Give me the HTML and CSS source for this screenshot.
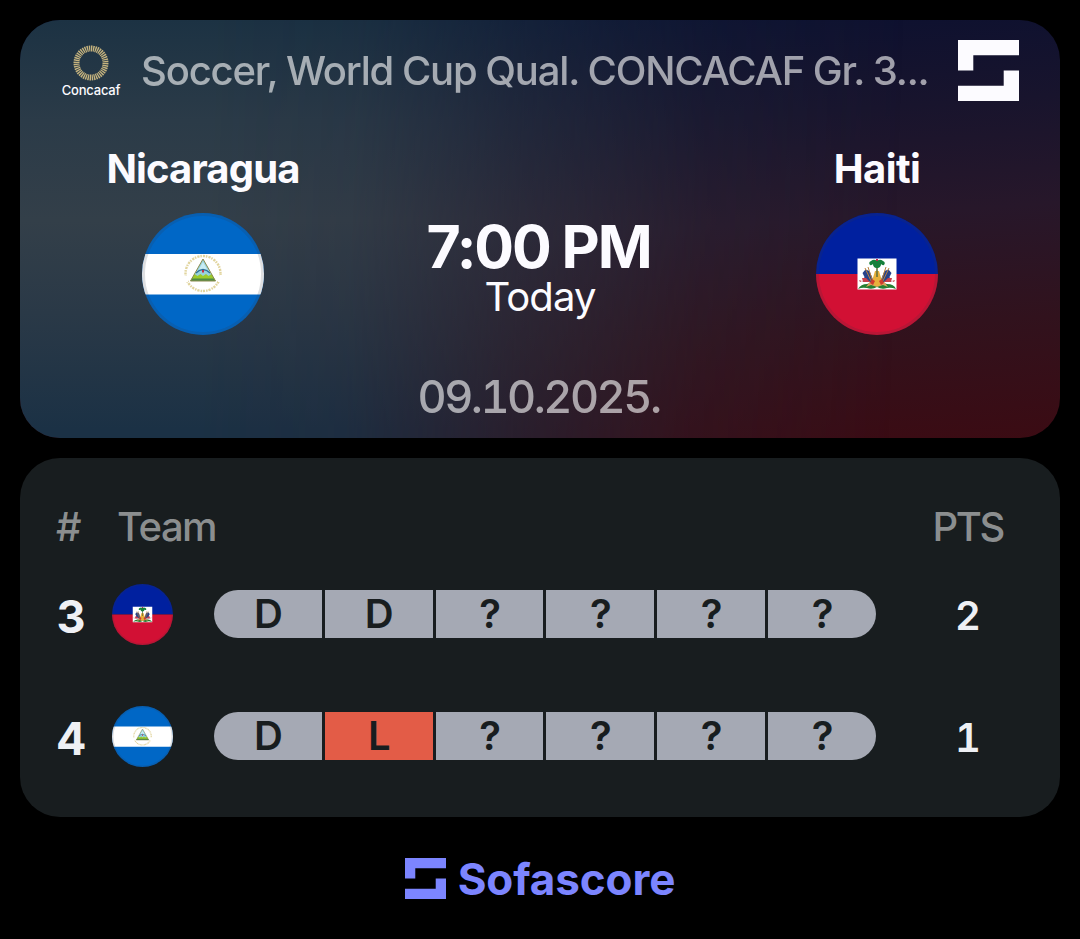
FILE: index.html
```
<!DOCTYPE html>
<html lang="en">
<head>
<meta charset="utf-8">
<title>Nicaragua – Haiti</title>
<link rel="stylesheet" href="styles.css">
</head>
<body>
<svg class="defs" width="0" height="0" aria-hidden="true">
  <symbol id="brand" viewBox="0 0 61 61">
    <path d="M0 0H61V15.3H15.3V30.5H0Z M61 30.5V61H0V45.7H45.7V30.5Z"/>
  </symbol>
  <clipPath id="disc"><circle cx="61" cy="61" r="61"/></clipPath>
  <symbol id="nicaragua" viewBox="0 0 122 122">
    <g clip-path="url(#disc)">
      <path fill="#0067c6" d="M0 0H122V122H0Z"/>
      <path fill="#fff" d="M0 41H122V81.500H0Z"/>
      <circle cx="61" cy="60.500" r="17.500" fill="none" stroke="#d9c985" stroke-width="2.400" stroke-dasharray="1.500 1.100 2.200 .9" pathLength="110" opacity=".8"/>
      <path fill="#fff" d="M41 63h5v6h-5zM76 63h5v6h-5z"/>
      <path fill="#97d3df" d="M61 46L73.500 68H48.500Z"/>
      <path fill="#c8ecf4" d="M61 49L65.500 57H56.500Z"/>
      <path fill="none" stroke="#2c6f9a" stroke-width="1.200" d="M54 60q7-7 14 0"/>
      <path fill="#9ccb2c" d="M52.500 61l3 2 3-2 2.500 2 3-2 2.500 2 3-2 4 7H48.500Z"/>
      <path fill="#4f8b45" d="M50 65.500H72L73.500 68H48.500Z"/>
      <path fill="#c43147" d="M60 57h2v2.500h-2z"/>
      <path fill="none" stroke="#8b8a4c" stroke-width="1" d="M61 46L73.500 68H48.500Z"/>
      <circle cx="61" cy="61" r="59.500" fill="none" stroke="#323b42" stroke-opacity=".16" stroke-width="3"/>
    </g>
  </symbol>
  <symbol id="haiti" viewBox="0 0 122 122">
    <g clip-path="url(#disc)">
      <path fill="#00209f" d="M0 0H122V61H0Z"/>
      <path fill="#d21034" d="M0 61H122V122H0Z"/>
      <path fill="#fff" d="M41.500 45.500H80.500V76.500H41.500Z"/>
      <path fill="#257f32" d="M42 76q3-5 9-5 4-2 10-2t10 2q7 0 9 5-5-2-9-1-5 2-10-1-5 3-10 1-5-1-9 1z"/>
      <path fill="#d9a05b" d="M50 74l5-7 6-3 6 3 5 7-5-2-6 2-6-2z"/>
      <path fill="#26428b" d="M46.500 60l3-3.500 4 1.500 5 12-8-2-4 1 2-5zM75.500 60l-3-3.500-4 1.500-5 12 8-2 4 1-2-5z"/>
      <path fill="#c8404b" d="M46 65l4 0 4 4-7 0zM76 65l-4 0-4 4 7 0zM43 67l3 1-2 1zM79 67l-3 1 2 1z"/>
      <path fill="none" stroke="#b8803b" stroke-width="1" d="M49 55l7 15M52 54l5 15M73 55l-7 15M70 54l-5 15"/>
      <path fill="#e7b13c" d="M59 58h4l3 10-3 5h-4l-3-5z"/>
      <path fill="#cf3d2e" d="M56 66l3 2-2 4-3-2zM66 66l-3 2 2 4 3-2z"/>
      <path fill="#65743c" d="M60.200 52h1.600v12h-1.600z"/>
      <path fill="#16803a" d="M61 48q3-2.500 6 0 3 1.500 1 4-2 .5-3-1 0 3-3 4h-2q-3-1-3-4-1 1.500-3 1-2-2.500 1-4 3-2.500 6 0z"/>
      <path fill="#c4254c" d="M60 46h2v2h-2z"/>
      <circle cx="61" cy="61" r="59.500" fill="none" stroke="#323b42" stroke-opacity=".16" stroke-width="3"/>
    </g>
  </symbol>
</svg>

<main class="page">
  <section class="match">
    <header class="match-head">
      <div class="league">
        <svg class="league-ring" viewBox="0 0 36 36">
          <circle cx="18" cy="18" r="14.500" fill="none" stroke="#c5b37e" stroke-width="6" stroke-dasharray="1.300 .7" pathLength="88"/>
        </svg>
        <span class="league-name">Concacaf</span>
      </div>
      <h1 class="title">Soccer, World Cup Qual. CONCACAF Gr. 3...</h1>
      <svg class="brand-mark"><use href="#brand"/></svg>
    </header>
    <div class="versus">
      <div class="team">
        <h2 class="team-name nic">Nicaragua</h2>
        <svg class="flag"><use href="#nicaragua"/></svg>
      </div>
      <div class="kickoff">
        <strong class="time">7:00 PM</strong>
        <span class="day">Today</span>
      </div>
      <div class="team">
        <h2 class="team-name hai">Haiti</h2>
        <svg class="flag"><use href="#haiti"/></svg>
      </div>
    </div>
    <p class="date">09.10.2025.</p>
  </section>

  <section class="table">
    <div class="row labels">
      <span class="rank-label">#</span>
      <span class="team-label">Team</span>
      <span class="pts-label">PTS</span>
    </div>
    <div class="row">
      <span class="rank">3</span>
      <svg class="flag-small"><use href="#haiti"/></svg>
      <div class="form"><span>D</span><span>D</span><span>?</span><span>?</span><span>?</span><span>?</span></div>
      <span class="pts">2</span>
    </div>
    <div class="row">
      <span class="rank">4</span>
      <svg class="flag-small"><use href="#nicaragua"/></svg>
      <div class="form"><span>D</span><span class="loss">L</span><span>?</span><span>?</span><span>?</span><span>?</span></div>
      <span class="pts">1</span>
    </div>
  </section>

  <footer class="foot">
    <svg class="foot-mark"><use href="#brand"/></svg>
    <span class="wordmark">Sofascore</span>
  </footer>
</main>
</body>
</html>
```
FILE: styles.css
```
* { box-sizing: border-box; margin: 0; padding: 0; }
body {
  background: #000;
  color: #fcfbff;
  font-family: Inter, Roboto, "Liberation Sans", sans-serif;
  font-size: 40px;
  line-height: 48px;
  white-space: nowrap;
}
.defs { position: absolute; }
svg { display: block; flex: none; }
.page { width: 1080px; height: 939px; padding: 20px; overflow: hidden; }

.match {
  position: relative;
  isolation: isolate;
  height: 418px;
  border-radius: 40px;
  overflow: hidden;
  background: linear-gradient(176deg, #3a0b14 2%, #34111b 25%, #29172a 50%, #18142d 74%, #0b1030 96%);
  background: linear-gradient(176deg, #0b1030 6%, #18142d 30%, #27172a 52%, #31121d 75%, #3b0b13 100%);
}
.match::before {
  content: "";
  position: absolute;
  inset: 0;
  z-index: -1;
  background: linear-gradient(180deg, #1c3243 0%, #2b3b48 24%, #333f49 48%, #2a3947 70%, #1b3145 98%);
  mask-image: linear-gradient(92deg, #000 18%, rgba(0, 0, 0, .9) 32%, rgba(0, 0, 0, .5) 48%, rgba(0, 0, 0, .16) 65%, transparent 84%);
}
.match-head { display: flex; align-items: center; height: 61px; margin: 20px 41px 0 40px; }
.league { display: flex; flex-direction: column; align-items: center; width: 62px; padding-top: 1px; }
.league-ring { width: 36px; height: 36px; }
.league-name { margin-top: 1px; font-size: 13px; line-height: 16px; font-weight: 500; letter-spacing: -.2px; }
.title { flex: 1; margin-left: 19px; font-size: 40px; font-weight: 500; letter-spacing: -1.180px; word-spacing: -.7px; color: #fff; opacity: .6; }
.brand-mark { width: 61px; height: 61px; fill: #fcfbff; }

.versus { display: flex; justify-content: space-between; height: 190px; margin: 44px 73px 0; }
.team { display: flex; flex-direction: column; align-items: center; width: 220px; }
.team-name { font-size: 40px; font-weight: 700; line-height: 48px; }
.nic { letter-spacing: -.850px; }
.hai { letter-spacing: -.6px; }
.flag { width: 122px; height: 122px; margin-top: 20px; }
.kickoff { display: flex; flex-direction: column; align-items: center; padding-top: 75px; }
.time { margin-right: 3px; font-size: 59px; line-height: 54px; font-weight: 700; letter-spacing: -2.100px; }
.day { line-height: 46px; font-weight: 400; letter-spacing: -.9px; }
.date { margin: 35px 3px 0 0; font-size: 45px; line-height: 54px; text-align: center; color: #fff; opacity: .6; font-weight: 500; font-feature-settings: "tnum"; letter-spacing: -2.500px; }

.table { display: flex; flex-direction: column; gap: 61px; height: 359px; margin-top: 20px; padding: 45px 56px 0 36px; border-radius: 40px; background: #181d1f; }
.row { display: flex; align-items: center; height: 61px; }
.labels { height: 48px; margin-bottom: -28px; color: #8b8e8f; font-weight: 500; }
.rank-label { width: 61px; }
.team-label { flex: 1; letter-spacing: -1.500px; }
.pts-label { letter-spacing: -2.400px; margin-right: 1px; }
.rank { width: 30px; margin-right: 26px; text-align: center; padding-top: 4px; font-size: 45px; line-height: 54px; font-weight: 700; color: #eef0f4; }
.flag-small { width: 61px; height: 61px; }
.form { display: flex; gap: 3px; width: 662px; height: 48px; margin: 0 0 1px 41px; border-radius: 24px; overflow: hidden; }
.form span { flex: 1; padding-left: 1px; background: #a5a9b4; color: #181d1f; text-align: center; font-weight: 600; line-height: 48px; }
.form .loss { background: #e35c47; }
.pts { width: 40px; margin-left: 72px; padding-top: 3px; text-align: center; font-weight: 600; color: #eef0f4; font-feature-settings: "tnum"; }

.foot { display: flex; align-items: center; justify-content: center; height: 41px; margin-top: 41px; color: #7c85ff; }
.foot-mark { width: 41px; height: 41px; margin-right: 12px; fill: #7c85ff; }
.wordmark { font-size: 44px; font-weight: 700; letter-spacing: -.100px; }
```
